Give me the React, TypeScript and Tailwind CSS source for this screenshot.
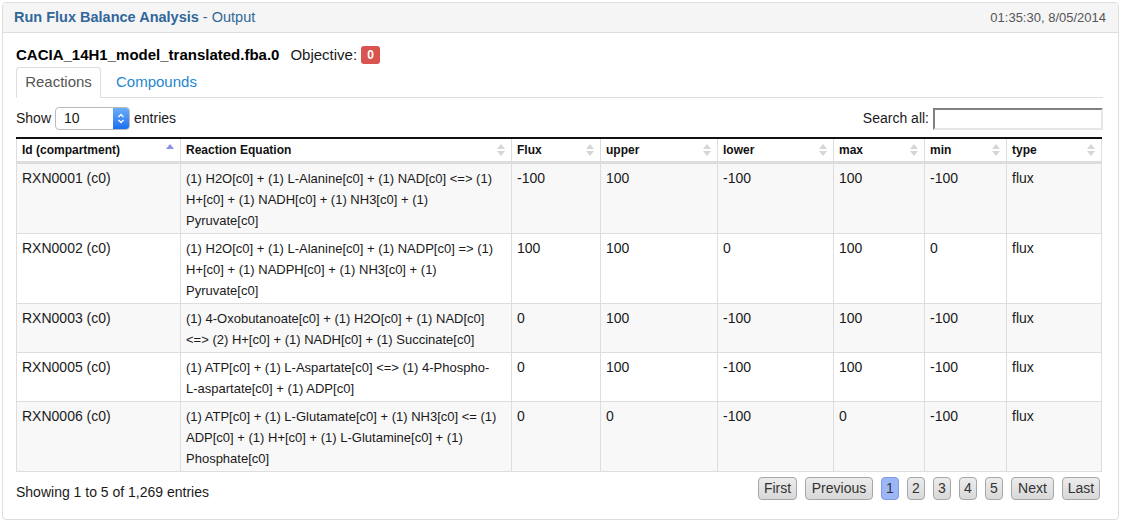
import React from "react";

type Row = {
    id: string;
    eq: string[];
    flux: string;
    upper: string;
    lower: string;
    max: string;
    min: string;
    type: string;
};

const rows: Row[] = [
    {
        id: "RXN0001 (c0)",
        eq: [
            "(1) H2O[c0] + (1) L-Alanine[c0] + (1) NAD[c0] <=> (1)",
            "H+[c0] + (1) NADH[c0] + (1) NH3[c0] + (1)",
            "Pyruvate[c0]",
        ],
        flux: "-100", upper: "100", lower: "-100", max: "100", min: "-100", type: "flux",
    },
    {
        id: "RXN0002 (c0)",
        eq: [
            "(1) H2O[c0] + (1) L-Alanine[c0] + (1) NADP[c0] => (1)",
            "H+[c0] + (1) NADPH[c0] + (1) NH3[c0] + (1)",
            "Pyruvate[c0]",
        ],
        flux: "100", upper: "100", lower: "0", max: "100", min: "0", type: "flux",
    },
    {
        id: "RXN0003 (c0)",
        eq: [
            "(1) 4-Oxobutanoate[c0] + (1) H2O[c0] + (1) NAD[c0]",
            "<=> (2) H+[c0] + (1) NADH[c0] + (1) Succinate[c0]",
        ],
        flux: "0", upper: "100", lower: "-100", max: "100", min: "-100", type: "flux",
    },
    {
        id: "RXN0005 (c0)",
        eq: [
            "(1) ATP[c0] + (1) L-Aspartate[c0] <=> (1) 4-Phospho-",
            "L-aspartate[c0] + (1) ADP[c0]",
        ],
        flux: "0", upper: "100", lower: "-100", max: "100", min: "-100", type: "flux",
    },
    {
        id: "RXN0006 (c0)",
        eq: [
            "(1) ATP[c0] + (1) L-Glutamate[c0] + (1) NH3[c0] <= (1)",
            "ADP[c0] + (1) H+[c0] + (1) L-Glutamine[c0] + (1)",
            "Phosphate[c0]",
        ],
        flux: "0", upper: "0", lower: "-100", max: "0", min: "-100", type: "flux",
    },
];

const columns = [
    { label: "Id (compartment)", w: "w-[164px]", sorted: true },
    { label: "Reaction Equation", w: "w-[331px]" },
    { label: "Flux", w: "w-[89px]" },
    { label: "upper", w: "w-[117px]" },
    { label: "lower", w: "w-[116px]" },
    { label: "max", w: "w-[91px]" },
    { label: "min", w: "w-[82px]" },
    { label: "type", w: "w-[95px]" },
];

function SortIcon({ sorted }: { sorted?: boolean }) {
    if (sorted) {
        return (
            <svg width="8" height="12" viewBox="0 0 8 12" className="shrink-0">
                <polygon points="4,0 8,5 0,5" fill="#8d8fe6" />
            </svg>
        );
    }
    return (
        <svg width="8" height="12" viewBox="0 0 8 12" className="shrink-0">
            <polygon points="4,0 8,5 0,5" fill="#d6d6d6" />
            <polygon points="0,7 8,7 4,12" fill="#d6d6d6" />
        </svg>
    );
}

function PageButton({ label, active, w }: { label: string; active?: boolean; w: string }) {
    return (
        <div
            className={`${w} h-[23px] flex items-center justify-center rounded-[4px] border text-[14px] text-[#333] ${
                active
                    ? "bg-[#9db6f7] border-[#7e9be0]"
                    : "bg-gradient-to-b from-[#ececec] to-[#d8d8d8] border-[#a6a6a6]"
            }`}
        >
            {label}
        </div>
    );
}

export default function App() {
    const cell = "border border-[#dddddd] align-top pl-[5px] pr-[5px] pt-[4px] pb-[2px] leading-[21px]";

    return (
        <div className="w-[1121px] h-[523px] bg-white pt-[2px] px-[2px] font-['Liberation_Sans',Arial,sans-serif] text-[#1a1a1a]">
            <div className="border border-[#dddddd] rounded-[4px] overflow-hidden">
                {/* panel heading */}
                <div className="h-[30px] bg-[#f5f5f5] border-b border-[#dddddd] flex items-center justify-between pl-[11px] pr-[12px]">
                    <div className="text-[14.5px] text-[#31679a]">
                        <span className="font-bold">Run Flux Balance Analysis</span> - Output
                    </div>
                    <div className="text-[13px] text-[#555]">01:35:30, 8/05/2014</div>
                </div>

                <div className="pl-[13px] pr-[15px] pt-[12px] pb-[17px]">
                    <div className="flex items-center h-[20px] text-[15px]">
                        <span className="font-bold text-black">CACIA_14H1_model_translated.fba.0</span>
                        <span className="ml-[11px]">Objective:</span>
                        <span className="ml-[4px] h-[18px] px-[6px] rounded-[3px] bg-[#d9534f] text-white text-[12px] font-bold flex items-center">
                            0
                        </span>
                    </div>

                    {/* tabs */}
                    <div className="mt-[2px] flex h-[31px] border-b border-[#dddddd] text-[15px]">
                        <div className="w-[85px] h-[31px] flex items-center justify-center border border-[#dddddd] border-b-white rounded-t-[4px] text-[#555] bg-white">
                            Reactions
                        </div>
                        <div className="h-[30px] flex items-center pl-[15px] text-[#1f87d0]">Compounds</div>
                    </div>

                    {/* controls */}
                    <div className="mt-[9px] flex items-center justify-between h-[23px] text-[14px]">
                        <div className="flex items-center">
                            <span>Show</span>
                            <div className="ml-[4px] w-[75px] h-[23px] flex border border-[#bbbbbb] rounded-[4px] overflow-hidden bg-white">
                                <span className="flex-1 pl-[8px] leading-[21px] text-[14px]">10</span>
                                <span className="w-[16px] bg-gradient-to-b from-[#6cacf9] to-[#1a6ff0] flex items-center justify-center">
                                    <svg width="8" height="13" viewBox="0 0 8 13">
                                        <polyline points="1.5,5 4,2.5 6.5,5" fill="none" stroke="white" strokeWidth="1.3" />
                                        <polyline points="1.5,8 4,10.5 6.5,8" fill="none" stroke="white" strokeWidth="1.3" />
                                    </svg>
                                </span>
                            </div>
                            <span className="ml-[4px]">entries</span>
                        </div>
                        <div className="flex items-center">
                            <span>Search all:</span>
                            <div className="ml-[4px] w-[170px] h-[22px] mt-[1px] bg-white border-2 border-t-[#808080] border-l-[#808080] border-r-[#e6e6e6] border-b-[#e6e6e6]" />
                        </div>
                    </div>

                    {/* table */}
                    <table className="mt-[7px] w-[1085px] table-fixed border-collapse text-[14px]">
                        <colgroup>
                            {columns.map((c) => (
                                <col key={c.label} className={c.w} />
                            ))}
                        </colgroup>
                        <thead>
                            <tr className="border-t-2 border-t-[#111]">
                                {columns.map((c) => (
                                    <th
                                        key={c.label}
                                        className="border-l border-r border-[#dddddd] border-b-[3px] border-b-[#dddddd] h-[24px] pl-[5px] pr-[6px] text-left font-bold text-[12px] text-[#111]"
                                    >
                                        <div className="flex items-center justify-between">
                                            <span>{c.label}</span>
                                            <SortIcon sorted={c.sorted} />
                                        </div>
                                    </th>
                                ))}
                            </tr>
                        </thead>
                        <tbody>
                            {rows.map((r, i) => (
                                <tr key={r.id} className={i % 2 === 0 ? "bg-[#f8f8f8]" : "bg-white"}>
                                    <td className={cell}>{r.id}</td>
                                    <td className={`${cell} text-[13px]`}>
                                        {r.eq.map((line) => (
                                            <div key={line} className="whitespace-nowrap">
                                                {line}
                                            </div>
                                        ))}
                                    </td>
                                    <td className={cell}>{r.flux}</td>
                                    <td className={cell}>{r.upper}</td>
                                    <td className={cell}>{r.lower}</td>
                                    <td className={cell}>{r.max}</td>
                                    <td className={cell}>{r.min}</td>
                                    <td className={cell}>{r.type}</td>
                                </tr>
                            ))}
                        </tbody>
                    </table>

                    {/* footer */}
                    <div className="mt-[5px] flex items-start justify-between">
                        <div className="pt-[5px] text-[14px] leading-[20px]">Showing 1 to 5 of 1,269 entries</div>
                        <div className="flex gap-[8px] mr-[3px]">
                            <PageButton label="First" w="w-[39px]" />
                            <PageButton label="Previous" w="w-[68px]" />
                            <PageButton label="1" w="w-[18px]" active />
                            <PageButton label="2" w="w-[18px]" />
                            <PageButton label="3" w="w-[18px]" />
                            <PageButton label="4" w="w-[18px]" />
                            <PageButton label="5" w="w-[18px]" />
                            <PageButton label="Next" w="w-[43px]" />
                            <PageButton label="Last" w="w-[38px]" />
                        </div>
                    </div>
                </div>
            </div>
        </div>
    );
}
